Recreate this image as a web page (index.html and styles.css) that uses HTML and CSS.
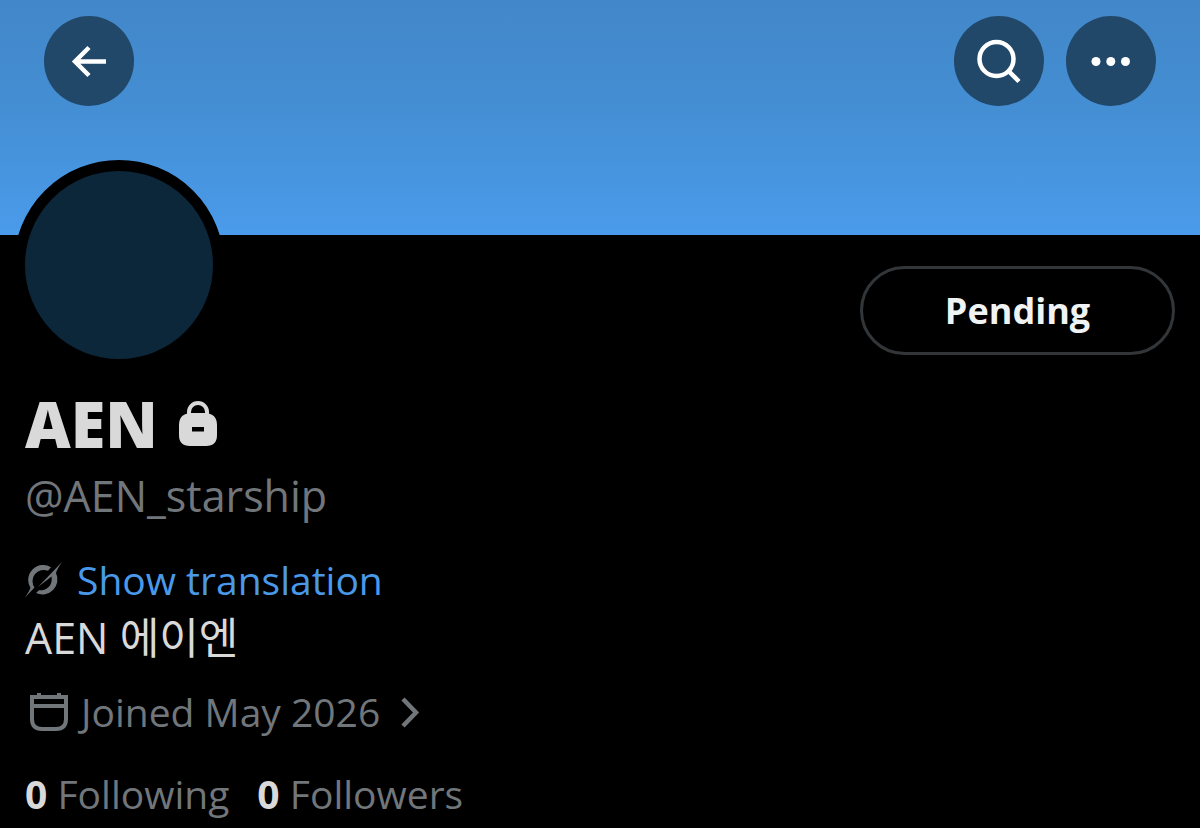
FILE: index.html
```html
<!DOCTYPE html>
<html lang="en">
<head>
    <meta charset="UTF-8">
    <meta name="viewport" content="width=device-width, initial-scale=1">
    <title>AEN (@AEN_starship)</title>
    <link rel="stylesheet" href="styles.css">
</head>
<body>
    <header class="banner">
        <button type="button" class="round-btn" aria-label="Back">
            <svg width="90" height="90" viewBox="0 0 90 90" fill="none" stroke="#fff" stroke-width="4.500">
                <path d="M62 45.500H31M45 31.500L31 45.500L45 59.500"/>
            </svg>
        </button>
        <div class="banner-actions">
            <button type="button" class="round-btn" aria-label="Search">
                <svg width="90" height="90" viewBox="0 0 90 90" fill="none" stroke="#fff" stroke-width="4.500">
                    <circle cx="42.500" cy="43" r="17"/>
                    <path d="M54.500 55L65 65.500"/>
                </svg>
            </button>
            <button type="button" class="round-btn" aria-label="More">
                <svg width="90" height="90" viewBox="0 0 90 90" fill="#fff">
                    <circle cx="30" cy="45.500" r="4.500"/>
                    <circle cx="44.800" cy="45.500" r="4.500"/>
                    <circle cx="59.500" cy="45.500" r="4.500"/>
                </svg>
            </button>
        </div>
    </header>

    <main class="profile">
        <div class="profile-top">
            <div class="avatar"></div>
            <button type="button" class="pending">Pending</button>
        </div>

        <h1 class="name">
            AEN
            <svg width="40" height="48" viewBox="0 0 40 48" role="img" aria-label="Protected account">
                <path d="M11 18V12a9 9 0 0 1 18 0v6" fill="none" stroke="#d9d9d9" stroke-width="4"/>
                <path fill="#d9d9d9" fill-rule="evenodd" d="M12 13H28Q39 14 39 25V35Q39 46 28 46H12Q1 46 1 35V25Q1 14 12 13ZM14 27V31.500H26V27Z"/>
            </svg>
        </h1>
        <p class="handle">@AEN_starship</p>

        <a href="#" class="translate">
            <svg width="40" height="40" viewBox="0 0 40 40" fill="#71767b">
                <path d="M26 7.200A15 15 0 0 0 5.500 28Q4 32 0 37.500L9.500 27.500A11.200 11.200 0 0 1 23 10.800Z"/>
                <path d="M37 2L13 27L26.500 16.500A11.200 11.200 0 0 1 14 30.200L11 33A15 15 0 0 0 31 13Q32 9 37 2Z"/>
            </svg>
            <span>Show translation</span>
        </a>
        <p class="bio">AEN 에이엔</p>

        <a href="#" class="joined">
            <svg width="44" height="40" viewBox="0 0 44 40" fill="none" stroke="#71767b" stroke-width="4">
                <path d="M7 5H41V27Q41 37 31 37H17Q7 37 7 27ZM7 14H41M14 1V5M34 1V5"/>
            </svg>
            <span>Joined May 2026</span>
            <svg width="28" height="32" viewBox="0 0 28 32" fill="none" stroke="#71767b" stroke-width="4.500">
                <path d="M11 3L24 16.500L11 30"/>
            </svg>
        </a>

        <nav class="counts">
            <a href="#"><strong>0</strong> Following</a>
            <a href="#"><strong>0</strong> Followers</a>
        </nav>
    </main>
</body>
</html>
```
FILE: styles.css
```css
* {
    box-sizing: border-box;
}
body {
    margin: 0;
    background: #000;
    color: #d9d9d9;
    font-family: "Open Sans", "Noto Sans CJK KR", sans-serif;
}
h1, p {
    margin: 0;
}
a {
    color: inherit;
    text-decoration: none;
}
button {
    font-family: inherit;
    cursor: pointer;
}
svg {
    display: block;
    flex-shrink: 0;
}
.banner {
    display: flex;
    justify-content: space-between;
    height: 235px;
    padding: 16px 44px;
    background: linear-gradient(#4287c9, #448ed3 45%, #4a9beb);
}
.banner-actions {
    display: flex;
    gap: 22px;
}
.round-btn {
    width: 90px;
    height: 90px;
    padding: 0;
    border: none;
    border-radius: 50%;
    background: #214769;
}
.profile {
    padding: 0 25px 4px;
}
.profile-top {
    display: flex;
    justify-content: space-between;
    align-items: flex-start;
}
.avatar {
    width: 210px;
    height: 210px;
    margin: -75px 0 0 -11px;
    border: 11px solid #000;
    border-radius: 50%;
    background: #0c263a;
}
.pending {
    width: 315px;
    height: 89px;
    margin-top: 31px;
    border: 3px solid #333639;
    border-radius: 45px;
    background: #000;
    color: #eff3f4;
    font-size: 36px;
    font-weight: 700;
}
.name {
    display: flex;
    align-items: center;
    gap: 20px;
    margin-top: 14px;
    font-size: 63px;
    font-weight: 800;
    line-height: 80px;
}
.handle {
    color: #71767b;
    font-size: 43px;
    line-height: 64px;
}
.translate, .joined {
    display: flex;
    align-items: center;
    gap: 12px;
    line-height: 56px;
}
.translate {
    margin-top: 24px;
    color: #4a99e9;
    font-size: 39px;
}
.bio {
    font-size: 43px;
    line-height: 60px;
}
.joined {
    margin-top: 16px;
    color: #71767b;
    font-size: 39px;
}
.counts {
    display: flex;
    gap: 28px;
    margin-top: 26px;
    color: #71767b;
    font-size: 39px;
    line-height: 56px;
}
.counts strong {
    color: #d9d9d9;
}
```
